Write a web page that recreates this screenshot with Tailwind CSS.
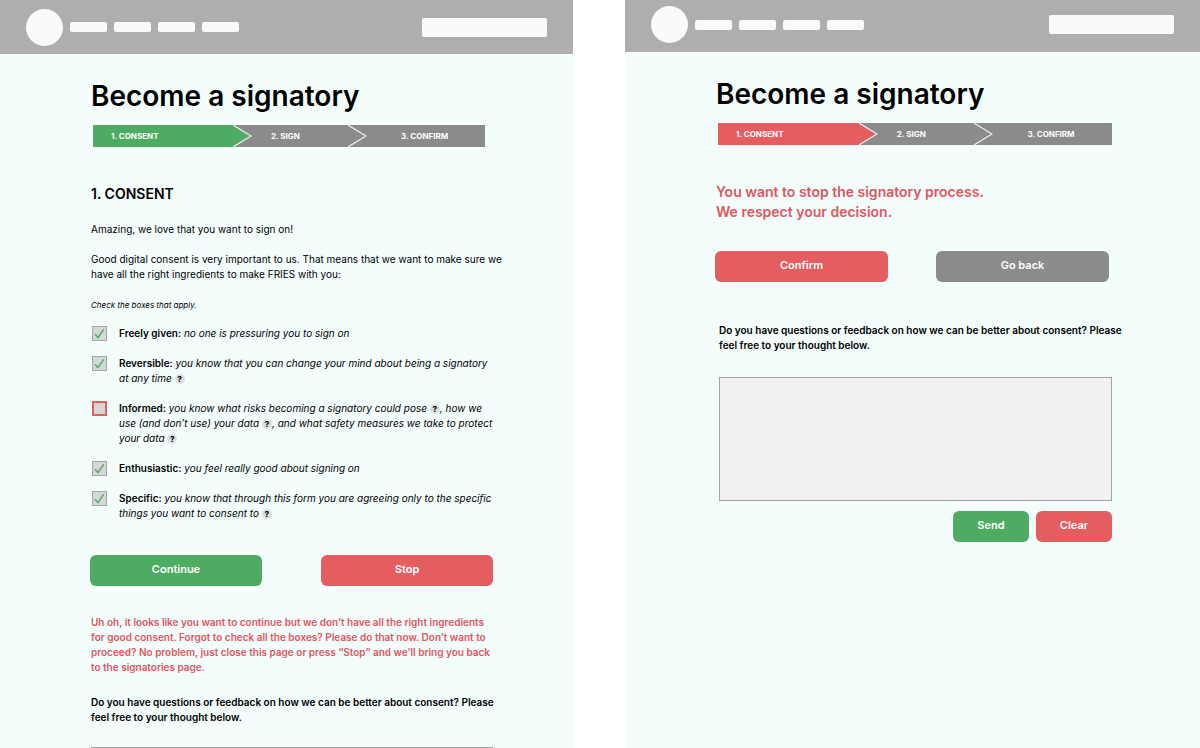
<!DOCTYPE html>
<html lang="en">
<head>
<meta charset="utf-8">
<meta name="viewport" content="width=device-width, initial-scale=1">
<title>Become a signatory</title>
<script src="https://cdn.jsdelivr.net/npm/@tailwindcss/browser@4"></script>
</head>
<body class="bg-white font-['Inter',sans-serif] text-[10px] leading-[15px] text-black">
<div class="grid h-screen grid-cols-[minmax(0,573fr)_minmax(0,575fr)] gap-x-[52px] overflow-hidden">

  <section class="bg-[#f3fdfc]">
    <header class="flex h-[54px] items-center bg-[#aeaeae] px-[26px]">
      <a href="#" aria-label="Home" class="size-[37px] rounded-full bg-[#fafafa]"></a>
      <nav aria-label="Main" class="ml-[7px] flex gap-[7px]">
        <a href="#" aria-label="Page one" class="h-2.5 w-[37px] rounded-xs bg-[#fafafa]"></a>
        <a href="#" aria-label="Page two" class="h-2.5 w-[37px] rounded-xs bg-[#fafafa]"></a>
        <a href="#" aria-label="Page three" class="h-2.5 w-[37px] rounded-xs bg-[#fafafa]"></a>
        <a href="#" aria-label="Page four" class="h-2.5 w-[37px] rounded-xs bg-[#fafafa]"></a>
      </nav>
      <input type="search" aria-label="Search" class="ml-auto h-[19px] w-[125px] rounded-xs bg-[#fafafa]">
    </header>
    <main class="pr-20 pl-[91px]">
      <h1 class="mt-6 text-[28px] leading-9 font-semibold whitespace-nowrap">Become a signatory</h1>
      <ol class="mt-[11px] mr-2 ml-0.5 flex h-[22px] text-[8px] leading-[22px] font-bold text-white">
        <li class="flex flex-[159] bg-[#4dac61]"><span class="flex-1 pl-[18px]">1. CONSENT</span>
          <svg class="h-full w-[19px] bg-[#8b8b8b]" viewBox="0 0 19 22"><path d="M0 0L18 11L0 22Z" fill="#4dac61"/><path d="M0 0L18 11L0 22" fill="none" stroke="#eef5f4" stroke-width="1.2"/></svg></li>
        <li class="flex flex-[115] bg-[#8b8b8b]"><span class="flex-1 pl-[19px]">2. SIGN</span>
          <svg class="h-full w-[19px]" viewBox="0 0 19 22"><path d="M0 0L18 11L0 22" fill="none" stroke="#eef5f4" stroke-width="1.2"/></svg></li>
        <li class="flex flex-[118] bg-[#8b8b8b]"><span class="pl-[34px]">3. CONFIRM</span></li>
      </ol>
      <h2 class="mt-[37px] text-sm leading-5 font-semibold">1. CONSENT</h2>
      <p class="mt-[18px] whitespace-nowrap">Amazing, we love that you want to sign on!</p>
      <p class="mt-[15px] whitespace-nowrap">Good digital consent is very important to us. That means that we want to make sure we<br>have all the right ingredients to make FRIES with you:</p>
      <p class="mt-4 text-[8px] italic">Check the boxes that apply.</p>

      <form>
        <div class="mt-[13px] flex flex-col gap-[15px]">
          <div class="flex gap-3">
            <span class="ml-px grid size-[15px] shrink-0"><input id="freely" type="checkbox" checked class="col-start-1 row-start-1 size-[15px] appearance-none border border-[#a3a9a7] bg-[#d6d8d7]"><svg class="pointer-events-none col-start-1 row-start-1 size-[15px]" viewBox="0 0 15 15"><path d="M3 8.2L6 11.6L11.7 3.4" fill="none" stroke="#4dac61" stroke-width="1.5"/></svg></span>
            <label for="freely" class="whitespace-nowrap italic"><b class="font-semibold not-italic">Freely given:</b> no one is pressuring you to sign on</label>
          </div>
          <div class="flex gap-3">
            <span class="ml-px grid size-[15px] shrink-0"><input id="reversible" type="checkbox" checked class="col-start-1 row-start-1 size-[15px] appearance-none border border-[#a3a9a7] bg-[#d6d8d7]"><svg class="pointer-events-none col-start-1 row-start-1 size-[15px]" viewBox="0 0 15 15"><path d="M3 8.2L6 11.6L11.7 3.4" fill="none" stroke="#4dac61" stroke-width="1.5"/></svg></span>
            <label for="reversible" class="whitespace-nowrap italic"><b class="font-semibold not-italic">Reversible:</b> you know that you can change your mind about being a signatory<br>at any time <button type="button" aria-label="Help" class="size-2.5 rounded-full bg-[#dcdfde] text-[8px] leading-[10px] font-extrabold not-italic">?</button></label>
          </div>
          <div class="flex gap-3">
            <span class="ml-px grid size-[15px] shrink-0"><input id="informed" type="checkbox" class="size-[15px] appearance-none border-2 border-[#e45e60] bg-[#d6d8d7]"></span>
            <label for="informed" class="whitespace-nowrap italic"><b class="font-semibold not-italic">Informed:</b> you know what risks becoming a signatory could pose <button type="button" aria-label="Help" class="size-2.5 rounded-full bg-[#dcdfde] text-[8px] leading-[10px] font-extrabold not-italic">?</button>, how we<br>use (and don’t use) your data <button type="button" aria-label="Help" class="size-2.5 rounded-full bg-[#dcdfde] text-[8px] leading-[10px] font-extrabold not-italic">?</button>, and what safety measures we take to protect<br>your data <button type="button" aria-label="Help" class="size-2.5 rounded-full bg-[#dcdfde] text-[8px] leading-[10px] font-extrabold not-italic">?</button></label>
          </div>
          <div class="flex gap-3">
            <span class="ml-px grid size-[15px] shrink-0"><input id="enthusiastic" type="checkbox" checked class="col-start-1 row-start-1 size-[15px] appearance-none border border-[#a3a9a7] bg-[#d6d8d7]"><svg class="pointer-events-none col-start-1 row-start-1 size-[15px]" viewBox="0 0 15 15"><path d="M3 8.2L6 11.6L11.7 3.4" fill="none" stroke="#4dac61" stroke-width="1.5"/></svg></span>
            <label for="enthusiastic" class="whitespace-nowrap italic"><b class="font-semibold not-italic">Enthusiastic:</b> you feel really good about signing on</label>
          </div>
          <div class="flex gap-3">
            <span class="ml-px grid size-[15px] shrink-0"><input id="specific" type="checkbox" checked class="col-start-1 row-start-1 size-[15px] appearance-none border border-[#a3a9a7] bg-[#d6d8d7]"><svg class="pointer-events-none col-start-1 row-start-1 size-[15px]" viewBox="0 0 15 15"><path d="M3 8.2L6 11.6L11.7 3.4" fill="none" stroke="#4dac61" stroke-width="1.5"/></svg></span>
            <label for="specific" class="whitespace-nowrap italic"><b class="font-semibold not-italic">Specific:</b> you know that through this form you are agreeing only to the specific<br>things you want to consent to <button type="button" aria-label="Help" class="size-2.5 rounded-full bg-[#dcdfde] text-[8px] leading-[10px] font-extrabold not-italic">?</button></label>
          </div>
        </div>
        <div class="mt-[34px] -ml-px flex gap-[59px]">
          <button type="button" class="h-[31px] flex-1 rounded-md bg-[#4dac61] pb-0.5 text-[11px] font-semibold text-white">Continue</button>
          <button type="button" class="h-[31px] flex-1 rounded-md bg-[#e45e60] pb-0.5 text-[11px] font-semibold text-white">Stop</button>
        </div>
        <p role="alert" class="mt-[29px] font-semibold whitespace-nowrap text-[#e0565e]">Uh oh, it looks like you want to continue but we don’t have all the right ingredients<br>for good consent. Forgot to check all the boxes? Please do that now. Don’t want to<br>proceed? No problem, just close this page or press “Stop” and we’ll bring you back<br>to the signatories page.</p>
        <label for="feedback-a" class="mt-5 block font-semibold whitespace-nowrap">Do you have questions or feedback on how we can be better about consent? Please<br>feel free to your thought below.</label>
        <textarea id="feedback-a" class="mt-[22px] block h-[124px] w-full resize-none border border-[#a0a5a4] bg-[#f1f1f1]"></textarea>
      </form>
    </main>
  </section>

  <section class="bg-[#f3fdfc]">
    <header class="flex h-[52px] items-center bg-[#aeaeae] px-[26px] pb-[3px]">
      <a href="#" aria-label="Home" class="size-[37px] rounded-full bg-[#fafafa]"></a>
      <nav aria-label="Main" class="ml-[7px] flex gap-[7px]">
        <a href="#" aria-label="Page one" class="h-2.5 w-[37px] rounded-xs bg-[#fafafa]"></a>
        <a href="#" aria-label="Page two" class="h-2.5 w-[37px] rounded-xs bg-[#fafafa]"></a>
        <a href="#" aria-label="Page three" class="h-2.5 w-[37px] rounded-xs bg-[#fafafa]"></a>
        <a href="#" aria-label="Page four" class="h-2.5 w-[37px] rounded-xs bg-[#fafafa]"></a>
      </nav>
      <input type="search" aria-label="Search" class="ml-auto h-[19px] w-[125px] rounded-xs bg-[#fafafa]">
    </header>
    <main class="pr-[88px] pl-[91px]">
      <h1 class="mt-6 text-[28px] leading-9 font-semibold whitespace-nowrap">Become a signatory</h1>
      <ol class="mt-[11px] ml-0.5 flex h-[22px] text-[8px] leading-[22px] font-bold text-white">
        <li class="flex flex-[159] bg-[#e45e60]"><span class="flex-1 pl-[18px]">1. CONSENT</span>
          <svg class="h-full w-[19px] bg-[#8b8b8b]" viewBox="0 0 19 22"><path d="M0 0L18 11L0 22Z" fill="#e45e60"/><path d="M0 0L18 11L0 22" fill="none" stroke="#eef5f4" stroke-width="1.2"/></svg></li>
        <li class="flex flex-[115] bg-[#8b8b8b]"><span class="flex-1 pl-[19px]">2. SIGN</span>
          <svg class="h-full w-[19px]" viewBox="0 0 19 22"><path d="M0 0L18 11L0 22" fill="none" stroke="#eef5f4" stroke-width="1.2"/></svg></li>
        <li class="flex flex-[118] bg-[#8b8b8b]"><span class="pl-[34px]">3. CONFIRM</span></li>
      </ol>
      <h2 class="mt-[37px] text-sm leading-5 font-semibold whitespace-nowrap text-[#e0565e]">You want to stop the signatory process.<br>We respect your decision.</h2>
      <form>
        <div class="mt-[29px] mr-[3px] -ml-px flex gap-12">
          <button type="button" class="h-[31px] flex-1 rounded-md bg-[#e45e60] pb-0.5 text-[11px] font-semibold text-white">Confirm</button>
          <button type="button" class="h-[31px] flex-1 rounded-md bg-[#8b8b8b] pb-0.5 text-[11px] font-semibold text-white">Go back</button>
        </div>
        <label for="feedback-b" class="mt-[41px] ml-[3px] block font-semibold whitespace-nowrap">Do you have questions or feedback on how we can be better about consent? Please<br>feel free to your thought below.</label>
        <div class="mt-6 ml-[3px]">
          <textarea id="feedback-b" class="block h-[124px] w-full resize-none border border-[#a0a5a4] bg-[#f1f1f1]"></textarea>
        </div>
        <div class="mt-2.5 flex justify-end gap-[7px]">
          <button type="button" class="h-[31px] w-[76px] rounded-md bg-[#4dac61] pb-0.5 text-[11px] font-semibold text-white">Send</button>
          <button type="button" class="h-[31px] w-[76px] rounded-md bg-[#e45e60] pb-0.5 text-[11px] font-semibold text-white">Clear</button>
        </div>
      </form>
    </main>
  </section>
</div>
</body>
</html>
